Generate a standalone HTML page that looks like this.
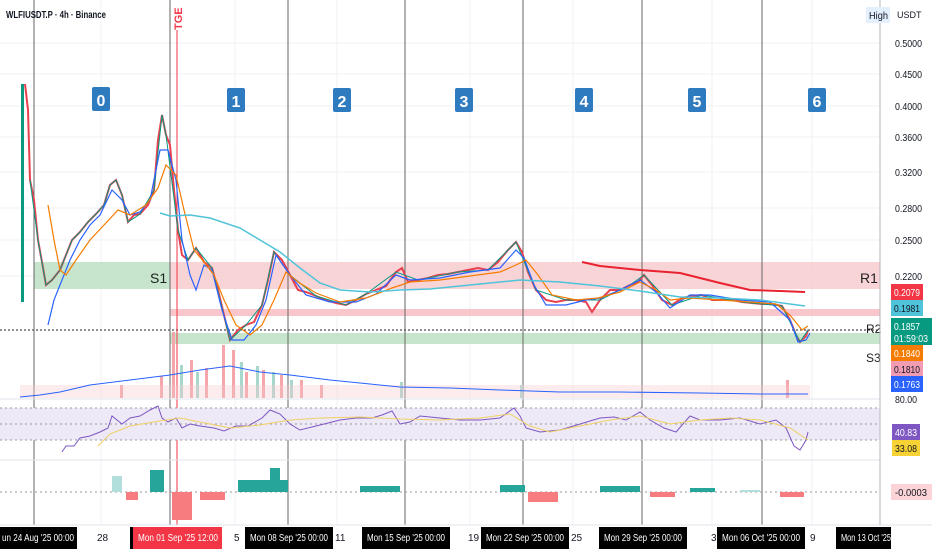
<!DOCTYPE html>
<html><head><meta charset="utf-8"><style>
body{margin:0;width:932px;height:550px;overflow:hidden;background:#fff;font-family:"Liberation Sans",sans-serif}
svg{display:block}
text{font-family:"Liberation Sans",sans-serif}
</style></head><body>
<svg width="932" height="550" viewBox="0 0 932 550" xmlns="http://www.w3.org/2000/svg">
<g stroke="#f0f2f5" stroke-width="1">
<line x1="0" y1="43" x2="880" y2="43"/><line x1="0" y1="74" x2="880" y2="74"/><line x1="0" y1="106" x2="880" y2="106"/><line x1="0" y1="137" x2="880" y2="137"/><line x1="0" y1="172" x2="880" y2="172"/><line x1="0" y1="208" x2="880" y2="208"/><line x1="0" y1="240" x2="880" y2="240"/><line x1="0" y1="276" x2="880" y2="276"/>
<line x1="101" y1="0" x2="101" y2="525"/><line x1="235" y1="0" x2="235" y2="525"/><line x1="337" y1="0" x2="337" y2="525"/><line x1="470" y1="0" x2="470" y2="525"/><line x1="573" y1="0" x2="573" y2="525"/><line x1="712" y1="0" x2="712" y2="525"/><line x1="812" y1="0" x2="812" y2="525"/>
</g>
<rect x="34" y="262" width="136" height="27" fill="#b9dfbf" opacity=".8"/>
<rect x="170" y="262" width="710" height="27" fill="#f8c9cd" opacity=".8"/>
<rect x="170" y="309" width="710" height="7" fill="#f8c0c5" opacity=".9"/>
<rect x="170" y="333" width="710" height="11" fill="#b9dfbf" opacity=".8"/>
<line x1="0" y1="330" x2="880" y2="330" stroke="#222" stroke-dasharray="2,2"/>
<text x="150" y="283" font-size="14" fill="#222">S1</text>
<text x="860" y="283" font-size="14" fill="#222">R1</text>
<text x="866" y="333" font-size="12" fill="#222">R2</text>
<text x="866" y="362" font-size="12" fill="#222">S3</text>
<g stroke="#666" stroke-width="1">
<line x1="34" y1="0" x2="34" y2="525"/><line x1="170" y1="0" x2="170" y2="525"/><line x1="288" y1="0" x2="288" y2="525"/><line x1="405" y1="0" x2="405" y2="525"/><line x1="523" y1="0" x2="523" y2="525"/><line x1="642" y1="0" x2="642" y2="525"/><line x1="762" y1="0" x2="762" y2="525"/>
</g>
<line x1="177" y1="30" x2="177" y2="525" stroke="#f23645" stroke-width="1"/>
<text transform="translate(182,30) rotate(-90)" font-size="11" font-weight="bold" fill="#f23645">TGE</text>
<g font-size="16" font-weight="bold" fill="#fff" text-anchor="middle">
<rect x="92" y="87" width="18" height="24" rx="2" fill="#2f7bbf"/><text x="101" y="106">0</text>
<rect x="227" y="88" width="18" height="24" rx="2" fill="#2f7bbf"/><text x="236" y="107">1</text>
<rect x="333" y="88" width="18" height="24" rx="2" fill="#2f7bbf"/><text x="342" y="107">2</text>
<rect x="455" y="88" width="18" height="24" rx="2" fill="#2f7bbf"/><text x="464" y="107">3</text>
<rect x="575" y="88" width="18" height="24" rx="2" fill="#2f7bbf"/><text x="584" y="107">4</text>
<rect x="688" y="88" width="18" height="24" rx="2" fill="#2f7bbf"/><text x="697" y="107">5</text>
<rect x="808" y="88" width="18" height="24" rx="2" fill="#2f7bbf"/><text x="817" y="107">6</text>
</g>
<rect x="21" y="84" width="3" height="218" fill="#089981"/>
<polyline fill="none" stroke="#e8404f" stroke-width="2" points="25,84 28,110 30,180 34,200 38,240 42,262 46,285 52,280 60,270 66,255 72,240 80,232 88,222 96,214 104,205 110,185 116,180 122,195 128,222 134,215 140,214 148,205 154,190 158,140 162,115 166,135 170,145 174,190 178,230 182,255 188,260 196,248 204,262 212,268 218,290 224,315 230,340 238,330 246,325 254,322 262,305 268,280 274,252 282,260 290,275 298,290 306,292 316,296 326,300 336,303 346,305 356,300 366,294 376,290 386,286 396,272 402,268 408,282 418,280 428,278 438,275 448,274 458,272 468,270 478,268 488,270 498,262 508,250 516,242 522,252 528,272 536,290 546,300 556,302 566,300 576,300 586,302 592,312 600,300 610,290 620,290 630,285 638,282 644,275 652,285 662,300 672,305 682,298 692,296 702,295 712,300 722,300 732,300 742,302 752,303 762,304 772,304 782,306 790,320 796,335 800,342 806,336 808,330"/>
<polyline fill="none" stroke="#089981" stroke-width="1" points="30,180 38,240 46,285 52,280 60,270 66,255 72,240 80,232 88,222 96,214 104,205 110,185 116,180 122,195 128,222 140,214 154,190 162,115 166,135 178,230 188,260 196,248 212,268 230,340 246,325 262,305 274,252 290,275 316,296 346,305 366,294 396,272 418,280 458,272 488,270 516,242 536,290 566,300 600,300 630,285 644,275 672,305 702,295 742,302 782,306 800,342 808,330"/>
<polyline fill="none" stroke="#2962ff" stroke-width="1.2" points="48,325 54,300 60,285 70,260 80,240 90,225 100,215 112,190 122,200 130,215 140,212 150,200 160,150 168,150 176,180 182,240 190,275 196,290 204,265 212,270 222,310 232,340 244,340 256,325 266,300 276,255 290,275 306,295 330,302 356,302 376,294 396,275 410,280 440,278 470,272 500,268 516,250 524,258 534,285 546,305 566,305 586,300 600,298 620,290 640,280 656,292 670,308 690,295 710,295 740,300 770,302 790,320 798,342 806,340 810,333"/>
<polyline fill="none" stroke="#f57c00" stroke-width="1.2" points="48,205 54,240 60,270 66,275 76,260 90,240 104,225 118,210 130,215 146,205 158,188 166,165 176,175 184,210 194,250 204,262 214,275 224,300 236,325 250,335 262,325 274,300 286,272 298,282 316,293 340,302 366,298 392,288 410,282 440,280 470,276 500,272 516,265 526,260 538,275 552,295 576,300 598,298 620,292 640,282 656,290 670,300 690,298 720,300 750,302 776,304 790,315 802,330 808,326"/>
<polyline fill="none" stroke="#4fc3d9" stroke-width="1.5" points="160,213 170,216 190,215 210,218 240,228 260,240 280,252 300,268 320,283 340,290 370,292 400,290 430,289 460,286 490,283 520,280 560,282 600,286 640,291 680,297 720,298 760,300 790,304 805,306"/>
<polyline fill="none" stroke="#e8222f" stroke-width="2" points="582,262 600,266 640,270 680,273 720,283 750,290 780,291 805,292"/>
<g fill="#f5a6ab">
<rect x="172" y="332" width="3" height="66"/><rect x="190" y="360" width="3" height="38"/><rect x="205" y="368" width="3" height="30"/><rect x="222" y="345" width="3" height="53"/><rect x="232" y="350" width="3" height="48"/><rect x="245" y="372" width="3" height="26"/><rect x="262" y="370" width="3" height="28"/><rect x="280" y="375" width="3" height="23"/><rect x="300" y="380" width="3" height="18"/><rect x="320" y="385" width="3" height="13"/><rect x="160" y="376" width="3" height="22"/><rect x="120" y="385" width="3" height="13"/><rect x="786" y="380" width="3" height="18"/>
</g>
<g fill="#a8d8cc">
<rect x="180" y="365" width="3" height="33"/><rect x="196" y="372" width="3" height="26"/><rect x="240" y="362" width="3" height="36"/><rect x="256" y="366" width="3" height="32"/><rect x="272" y="372" width="3" height="26"/><rect x="290" y="380" width="3" height="18"/><rect x="400" y="382" width="3" height="16"/><rect x="520" y="385" width="3" height="13"/>
</g>
<rect x="20" y="385" width="790" height="13" fill="#f5c9cc" opacity=".35"/>
<polyline fill="none" stroke="#2962ff" stroke-width="1" points="20,397 40,395 60,392 90,385 130,380 170,375 200,370 230,366 260,372 290,375 330,380 370,384 400,387 450,388 500,390 560,392 620,392 700,393 760,394 808,394"/>
<line x1="0" y1="399" x2="880" y2="399" stroke="#e0e3eb"/>
<rect x="0" y="408" width="880" height="32" fill="#ede9f7"/>
<g stroke="#999" stroke-dasharray="2,3"><line x1="0" y1="408" x2="880" y2="408"/><line x1="0" y1="424" x2="880" y2="424"/><line x1="0" y1="440" x2="880" y2="440"/></g>
<polyline fill="none" stroke="#7e57c2" stroke-width="1" points="62,452 66,446 74,446 80,438 90,436 100,432 108,428 112,416 122,424 130,418 140,416 150,410 158,406 162,418 168,422 176,418 182,428 190,424 200,426 214,428 224,431 236,426 248,426 262,418 270,410 280,414 290,424 300,430 320,425 340,420 356,418 372,418 382,415 392,411 400,424 410,422 420,416 440,418 460,420 480,420 500,418 514,408 520,416 526,428 540,432 560,430 580,424 600,418 614,417 626,420 640,412 650,420 664,428 676,432 690,416 700,420 720,420 740,418 760,424 776,420 786,428 794,446 800,450 806,440 808,432"/>
<polyline fill="none" stroke="#f0d064" stroke-width="1" points="98,446 110,434 130,426 160,421 180,418 200,422 230,428 260,425 290,420 320,418 360,417 400,419 440,420 480,418 510,414 530,426 550,432 580,426 610,420 640,416 670,424 700,420 730,418 760,420 790,428 808,440"/>
<line x1="0" y1="460" x2="880" y2="460" stroke="#e0e3eb"/>
<line x1="0" y1="492" x2="880" y2="492" stroke="#999" stroke-dasharray="2,3"/>
<g fill="#b2dfdb"><rect x="112" y="476" width="10" height="16"/><rect x="740" y="490" width="20" height="2"/></g>
<g fill="#26a69a"><rect x="150" y="470" width="14" height="22"/><rect x="238" y="480" width="50" height="12"/><rect x="270" y="468" width="10" height="24"/><rect x="360" y="486" width="40" height="6"/><rect x="500" y="485" width="25" height="7"/><rect x="600" y="486" width="40" height="6"/><rect x="690" y="488" width="25" height="4"/></g>
<g fill="#f77c80"><rect x="126" y="492" width="12" height="8"/><rect x="172" y="492" width="20" height="28"/><rect x="200" y="492" width="25" height="8"/><rect x="528" y="492" width="30" height="10"/><rect x="650" y="492" width="25" height="5"/><rect x="780" y="492" width="24" height="5"/></g>
<line x1="880" y1="0" x2="880" y2="525" stroke="#b2b5be"/>
<rect x="866" y="7" width="24" height="16" fill="#e3effd" rx="2"/>
<text x="869" y="19" font-size="10" fill="#131722" textLength="19" lengthAdjust="spacingAndGlyphs">High</text>
<text x="897" y="18" font-size="9" fill="#131722">USDT</text>
<g font-size="10" fill="#131722">
<text x="895" y="47" textLength="27" lengthAdjust="spacingAndGlyphs">0.5000</text><text x="895" y="78" textLength="27" lengthAdjust="spacingAndGlyphs">0.4500</text><text x="895" y="110" textLength="27" lengthAdjust="spacingAndGlyphs">0.4000</text><text x="895" y="141" textLength="27" lengthAdjust="spacingAndGlyphs">0.3600</text><text x="895" y="176" textLength="27" lengthAdjust="spacingAndGlyphs">0.3200</text><text x="895" y="212" textLength="27" lengthAdjust="spacingAndGlyphs">0.2800</text><text x="895" y="244" textLength="27" lengthAdjust="spacingAndGlyphs">0.2500</text><text x="895" y="280" textLength="27" lengthAdjust="spacingAndGlyphs">0.2200</text><text x="895" y="403" textLength="22" lengthAdjust="spacingAndGlyphs">80.00</text>
</g>
<g font-size="10" fill="#fff">
<rect x="891" y="284" width="32" height="16" fill="#f23645"/><text x="894" y="296" textLength="26" lengthAdjust="spacingAndGlyphs">0.2079</text>
<rect x="891" y="300" width="32" height="16" fill="#4fc3d9"/><text x="894" y="312" fill="#131722" textLength="26" lengthAdjust="spacingAndGlyphs">0.1981</text>
<rect x="891" y="318" width="41" height="27" fill="#089981"/><text x="894" y="330" textLength="26" lengthAdjust="spacingAndGlyphs">0.1857</text><text x="894" y="342" textLength="34" lengthAdjust="spacingAndGlyphs">01:59:03</text>
<rect x="891" y="345" width="32" height="16" fill="#f57c00"/><text x="894" y="357" textLength="26" lengthAdjust="spacingAndGlyphs">0.1840</text>
<rect x="891" y="361" width="32" height="16" fill="#f19cb3"/><text x="894" y="373" fill="#131722" textLength="26" lengthAdjust="spacingAndGlyphs">0.1810</text>
<rect x="891" y="376" width="32" height="16" fill="#2962ff"/><text x="894" y="388" textLength="26" lengthAdjust="spacingAndGlyphs">0.1763</text>
<rect x="892" y="424" width="28" height="16" fill="#7e57c2"/><text x="895" y="436" textLength="22" lengthAdjust="spacingAndGlyphs">40.83</text>
<rect x="892" y="440" width="28" height="16" fill="#f7d234"/><text x="895" y="452" fill="#131722" textLength="22" lengthAdjust="spacingAndGlyphs">33.08</text>
<rect x="891" y="484" width="41" height="16" fill="#fcd3d6"/><text x="895" y="496" fill="#131722" textLength="32" lengthAdjust="spacingAndGlyphs">-0.0003</text>
</g>
<text x="6" y="18" font-size="10" font-weight="bold" fill="#131722" textLength="100" lengthAdjust="spacingAndGlyphs">WLFIUSDT.P · 4h · Binance</text>
<line x1="0" y1="525" x2="932" y2="525" stroke="#e0e3eb"/>
<g font-size="10" fill="#fff">
<rect x="0" y="527" width="77" height="22" fill="#000"/><text x="2" y="541" textLength="72" lengthAdjust="spacingAndGlyphs">un 24 Aug '25   00:00</text>
<rect x="130" y="527" width="92" height="22" fill="#000"/><rect x="133" y="527" width="89" height="22" fill="#f23645"/><text x="138" y="541" textLength="80" lengthAdjust="spacingAndGlyphs">Mon 01 Sep '25   12:00</text>
<rect x="245" y="527" width="88" height="22" fill="#000"/><text x="250" y="541" textLength="78" lengthAdjust="spacingAndGlyphs">Mon 08 Sep '25   00:00</text>
<rect x="362" y="527" width="88" height="22" fill="#000"/><text x="367" y="541" textLength="78" lengthAdjust="spacingAndGlyphs">Mon 15 Sep '25   00:00</text>
<rect x="481" y="527" width="88" height="22" fill="#000"/><text x="486" y="541" textLength="78" lengthAdjust="spacingAndGlyphs">Mon 22 Sep '25   00:00</text>
<rect x="599" y="527" width="88" height="22" fill="#000"/><text x="604" y="541" textLength="78" lengthAdjust="spacingAndGlyphs">Mon 29 Sep '25   00:00</text>
<rect x="717" y="527" width="88" height="22" fill="#000"/><text x="722" y="541" textLength="78" lengthAdjust="spacingAndGlyphs">Mon 06 Oct '25   00:00</text>
<rect x="836" y="527" width="55" height="22" fill="#000"/><text x="841" y="541" textLength="50" lengthAdjust="spacingAndGlyphs">Mon 13 Oct '25</text>
</g>
<g font-size="10" fill="#131722"><text x="97" y="541">28</text><text x="234" y="541">5</text><text x="335" y="541">11</text><text x="468" y="541">19</text><text x="571" y="541">25</text><text x="711" y="541">3</text><text x="810" y="541">9</text></g>
</svg>
</body></html>
